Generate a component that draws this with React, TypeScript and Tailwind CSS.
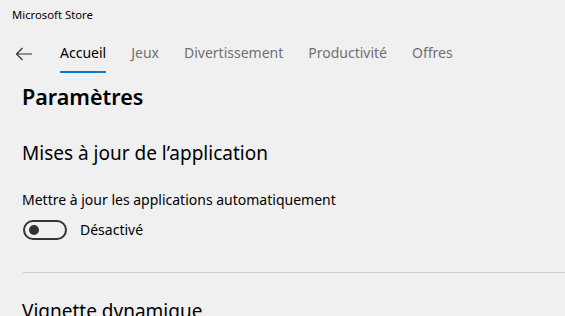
import React from "react";

const tabs = ["Accueil", "Jeux", "Divertissement", "Productivité", "Offres"];

export default function App() {
  return (
    <div
      className="w-[565px] h-[316px] overflow-hidden bg-[#f0f0f0] text-black"
      style={{ fontFamily: '"Noto Sans", "Open Sans", sans-serif' }}
    >
      <div className="h-[30px] pl-[12px] pt-[7px] text-[11.3px] leading-[16px]">Microsoft Store</div>
      <div className="flex items-start h-[46px]">
        <div className="w-[48px] flex justify-center pt-[17px]">
          <svg width="18" height="14" viewBox="0 0 18 14" fill="none" stroke="#333" strokeWidth="1.2">
            <path d="M17 7H1.5M7.5 1L1.5 7l6 6" />
          </svg>
        </div>
        <div className="flex gap-[25px] pl-[12px]">
          {tabs.map((t, i) => (
            <div key={t} className="flex flex-col">
              <span className={`text-[14px] leading-[20px] pt-[13px] ${i === 0 ? "text-black" : "text-[#707070]"}`}>{t}</span>
              <div className={`h-[2px] mt-[8px] ${i === 0 ? "bg-[#0078d7]" : "bg-transparent"}`} />
            </div>
          ))}
        </div>
      </div>
      <div className="pl-[21px]">
        <div className="text-[21.5px] font-semibold leading-[26px] mt-[8px] pl-[1px]">Paramètres</div>
        <div className="text-[19px] leading-[26px] mt-[30px] pl-[1px]">Mises à jour de l’application</div>
        <div className="text-[14px] leading-[20px] mt-[24px] pl-[1px]">Mettre à jour les applications automatiquement</div>
        <div className="flex items-center mt-[10px] gap-[13px] pl-[2px]">
          <div className="w-[44px] h-[20px] rounded-full border-2 border-[#333] flex items-center pl-[4px]">
            <div className="w-[10px] h-[10px] rounded-full bg-[#333]" />
          </div>
          <span className="text-[14px] leading-[20px]">Désactivé</span>
        </div>
        <div className="h-px bg-[#cccccc] mt-[32px] ml-[2px]" />
        <div className="text-[19px] leading-[26px] mt-[25px] pl-[1px]">Vignette dynamique</div>
      </div>
    </div>
  );
}
